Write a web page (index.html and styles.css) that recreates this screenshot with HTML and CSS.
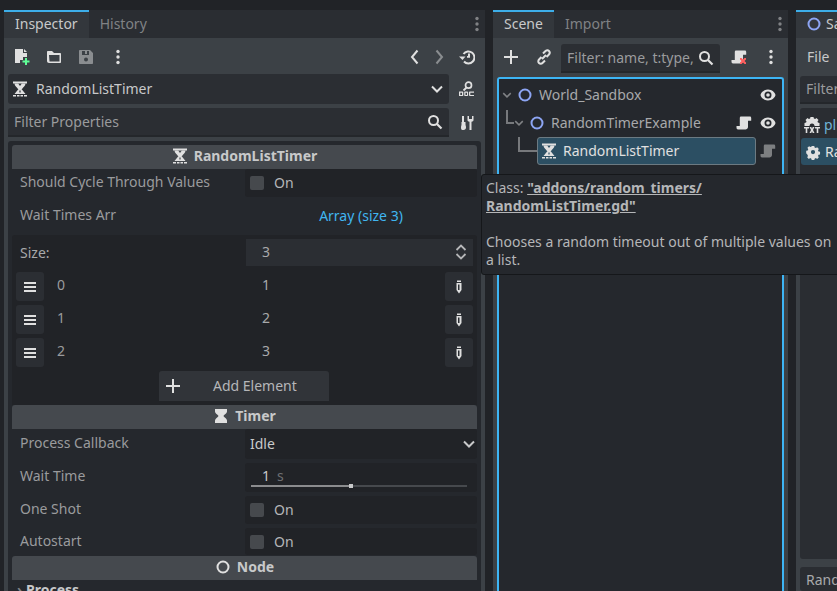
FILE: index.html
```html
<!DOCTYPE html>
<html lang="en">
<head>
    <meta charset="UTF-8">
    <title>Godot editor docks</title>
    <link rel="stylesheet" href="styles.css">
</head>
<body>
    <svg class="defs" width="0" height="0">
        <symbol id="i-timer" viewBox="0 0 16 16">
            <path fill="currentColor" d="M1 .5h14v2H1z"/>
            <path fill="currentColor" d="M2.500 2.500h3.700L8 5l1.800-2.500h3.700c0 2.500-2.500 3.800-3.500 5.500H6C5 6.300 2.500 5 2.500 2.500z"/>
            <path fill="currentColor" fill-rule="evenodd" d="M6.500 8h3l4 5h-11zM7.400 9.500v2h1.200v-2z"/>
            <path fill="currentColor" d="M1 14h3v1.500H1zM5 14h2.500v1.500H5zM8.500 14H11v1.500H8.500zM12 14h3v1.500h-3z"/>
        </symbol>
        <symbol id="i-hourglass" viewBox="0 0 16 16">
            <path fill="currentColor" d="M2 1h12v2.500c0 2-3 3-3.500 4.500.5 1.500 3.500 2.500 3.500 4.500V15H2v-2.500C2 10.500 5 9.500 5.500 8 5 6.500 2 5.500 2 3.500z"/>
        </symbol>
        <symbol id="i-node" viewBox="0 0 16 16">
            <circle cx="8" cy="8" r="5.500" fill="none" stroke="currentColor" stroke-width="2"/>
        </symbol>
        <symbol id="i-script" viewBox="0 0 16 16">
            <path fill="currentColor" d="M5 1.500c-.8 0-1.200.7-1.200 1.500v8H.5v1.500c0 1 .5 2 1.500 2h7.500c1.200 0 2.500-1 2.500-2.500V5.800h3.200V3c0-.8-.5-1.500-1.200-1.500z"/>
        </symbol>
        <symbol id="i-eye" viewBox="0 0 16 16">
            <path fill="currentColor" fill-rule="evenodd" d="M8 2.500c4 0 7 3 7.500 5.500-.5 2.500-3.500 5.500-7.500 5.500S1 10.500.5 8C1 5.500 4 2.500 8 2.500zm0 2a3.500 3.500 0 1 0 0 7 3.500 3.500 0 0 0 0-7zM8 6.200a1.800 1.800 0 1 1 0 3.600 1.800 1.800 0 0 1 0-3.600z"/>
        </symbol>
        <symbol id="i-search" viewBox="0 0 16 16">
            <circle cx="6.500" cy="6.500" r="4.500" fill="none" stroke="currentColor" stroke-width="2"/>
            <path d="M10 10l4.500 4.500" stroke="currentColor" stroke-width="2.200" fill="none"/>
        </symbol>
        <symbol id="i-dots" viewBox="0 0 16 16">
            <circle cx="8" cy="2.500" r="1.700" fill="currentColor"/>
            <circle cx="8" cy="8" r="1.700" fill="currentColor"/>
            <circle cx="8" cy="13.500" r="1.700" fill="currentColor"/>
        </symbol>
        <symbol id="i-down" viewBox="0 0 16 16">
            <path d="M3 5.500l5 5 5-5" fill="none" stroke="currentColor" stroke-width="2"/>
        </symbol>
        <symbol id="i-lines" viewBox="0 0 16 16">
            <path fill="currentColor" d="M2 3h12v2H2zM2 7h12v2H2zM2 11h12v2H2z"/>
        </symbol>
        <symbol id="i-edit" viewBox="0 0 16 16">
            <path fill="currentColor" fill-rule="evenodd" d="M6 1.500h4V3H6zM5.500 4h5v7L8 14.500 5.500 11zM7 5.500V11h1.500V5.500z"/>
        </symbol>
        <symbol id="i-plus" viewBox="0 0 16 16">
            <path fill="currentColor" d="M7 1h2v6h6v2H9v6H7V9H1V7h6z"/>
        </symbol>
    </svg>

    <main class="docks">
        <section class="dock dock-inspector">
            <div class="tabs">
                <div class="tab active">Inspector</div>
                <div class="tab">History</div>
                <svg class="ic tab-menu"><use href="#i-dots"/></svg>
            </div>
            <div class="toolbar">
                <span class="tool">
                    <svg class="ic" viewBox="0 0 16 16">
                        <path fill="#e0e0e0" d="M1 0h8v4h4v4H9v3H6v3H1z"/>
                        <path fill="#e0e0e0" d="M10 0l3 3h-3z"/>
                        <path fill="#5fff97" d="M11 9h2v2.500h2.500v2H13V16h-2v-2.500H8.500v-2H11z"/>
                    </svg>
                </span>
                <span class="tool">
                    <svg class="ic" viewBox="0 0 16 16">
                        <path fill="#e0e0e0" fill-rule="evenodd" d="M1 3c0-.6.4-1 1-1h4l2 2h6c.6 0 1 .4 1 1v8c0 .6-.4 1-1 1H3c-1.100 0-2-.9-2-2zm2 3l.5 6.500h10V6z"/>
                    </svg>
                </span>
                <span class="tool">
                    <svg class="ic dim" viewBox="0 0 16 16">
                        <path fill="currentColor" fill-rule="evenodd" d="M2 1h10l3 3v10c0 .6-.4 1-1 1H2c-.6 0-1-.4-1-1V2c0-.6.4-1 1-1zm2 1v4h7V2H9v3H7V2zM8 8.500a2 2 0 1 0 0 4 2 2 0 0 0 0-4z"/>
                    </svg>
                </span>
                <span class="tool"><svg class="ic"><use href="#i-dots"/></svg></span>
                <span class="spacer"></span>
                <span class="tool-nav">
                    <svg class="ic" viewBox="0 0 16 16"><path d="M10.500 1.500L5 8l5.500 6.500" fill="none" stroke="currentColor" stroke-width="2"/></svg>
                </span>
                <span class="tool-nav">
                    <svg class="ic dim" viewBox="0 0 16 16"><path d="M5.500 1.500L11 8l-5.500 6.500" fill="none" stroke="currentColor" stroke-width="2"/></svg>
                </span>
                <span class="tool-side">
                    <svg class="ic" viewBox="0 0 16 16">
                        <path d="M4.500 5a6 6 0 1 1 .5 7.500" fill="none" stroke="currentColor" stroke-width="2"/>
                        <path fill="currentColor" d="M0 7.500h6.500L3.500 11zM9 4.500h2v4.200H8V7h1z"/>
                    </svg>
                </span>
            </div>
            <div class="tool-row">
                <div class="picker">
                    <svg class="ic"><use href="#i-timer"/></svg>
                    <span class="picker-name">RandomListTimer</span>
                    <svg class="ic chev"><use href="#i-down"/></svg>
                </div>
                <span class="tool-side">
                    <svg class="ic" viewBox="0 0 16 16">
                        <circle cx="9.500" cy="4.200" r="3" fill="none" stroke="currentColor" stroke-width="1.700"/>
                        <path d="M7.500 6.500L4.500 9.500" stroke="currentColor" stroke-width="1.800" fill="none"/>
                        <path fill="currentColor" d="M0 10.500h3.500c.5 0 .8.400.8.800v2.900c0 .5-.3.800-.8.800H0zm1.300 1.200v2.300h1.700v-2.300zM5.200 11.300c0-.4.300-.8.800-.8h2.300c.5 0 .8.400.8.800v2.900c0 .5-.3.800-.8.800H6c-.5 0-.8-.3-.8-.8zm1.300.4v2.300h1.500v-2.300zM10 11.300c0-.4.300-.8.800-.8H15v1.200h-3.700v2.300H15V15h-4.200c-.5 0-.8-.3-.8-.8z"/>
                    </svg>
                </span>
            </div>
            <div class="tool-row filter-row">
                <div class="filter">
                    <span class="filter-text">Filter Properties</span>
                    <svg class="ic"><use href="#i-search"/></svg>
                </div>
                <span class="tool-side">
                    <svg class="ic" viewBox="0 0 16 16">
                        <path fill="currentColor" d="M3 1h2v6h1.500v2.500c0 1 .5 1.500.5 3 0 1.500-1 2.500-2.500 2.500S2 15 2 12.500c0-1.500.5-2 .5-3V7H3zM10 1v3h3V1h1.500v4c0 1-.8 1.500-2 1.800V15h-2V6.800c-1.200-.3-2-.8-2-1.800V1z"/>
                    </svg>
                </span>
            </div>
            <div class="props">
                <h3 class="section">
                    <svg class="ic"><use href="#i-timer"/></svg>RandomListTimer
                </h3>
                <div class="prop prop-check first">
                    <span class="prop-label">Should Cycle Through Values</span>
                    <span class="prop-value"><i class="box"></i>On</span>
                </div>
                <div class="prop prop-array">
                    <span class="prop-label">Wait Times Arr</span>
                    <span class="prop-link">Array (size 3)</span>
                </div>
                <div class="array">
                    <div class="size-row">
                        <span class="size-label">Size:</span>
                        <span class="size-value">3
                            <svg class="ic updown" viewBox="0 0 16 16"><path d="M3.500 6L8 1.500 12.500 6M3.500 10L8 14.500 12.500 10" fill="none" stroke="currentColor" stroke-width="1.800"/></svg>
                        </span>
                    </div>
                    <div class="item">
                        <span class="square"><svg class="ic"><use href="#i-lines"/></svg></span>
                        <span class="item-key">0</span>
                        <span class="item-value">1</span>
                        <span class="square"><svg class="ic"><use href="#i-edit"/></svg></span>
                    </div>
                    <div class="item">
                        <span class="square"><svg class="ic"><use href="#i-lines"/></svg></span>
                        <span class="item-key">1</span>
                        <span class="item-value">2</span>
                        <span class="square"><svg class="ic"><use href="#i-edit"/></svg></span>
                    </div>
                    <div class="item">
                        <span class="square"><svg class="ic"><use href="#i-lines"/></svg></span>
                        <span class="item-key">2</span>
                        <span class="item-value">3</span>
                        <span class="square"><svg class="ic"><use href="#i-edit"/></svg></span>
                    </div>
                    <div class="add-btn">
                        <svg class="ic"><use href="#i-plus"/></svg>
                        <span class="add-text">Add Element</span>
                    </div>
                </div>
                <h3 class="section">
                    <svg class="ic"><use href="#i-hourglass"/></svg>Timer
                </h3>
                <div class="prop prop-select">
                    <span class="prop-label">Process Callback</span>
                    <span class="prop-value">Idle<svg class="ic chev"><use href="#i-down"/></svg></span>
                </div>
                <div class="prop prop-slider">
                    <span class="prop-label">Wait Time</span>
                    <span class="prop-value slider-value">
                        <span class="num">1<em>s</em></span>
                        <span class="slider"><i class="slider-fill"></i><i class="slider-knob"></i></span>
                    </span>
                </div>
                <div class="prop prop-check">
                    <span class="prop-label">One Shot</span>
                    <span class="prop-value"><i class="box"></i>On</span>
                </div>
                <div class="prop prop-check last">
                    <span class="prop-label">Autostart</span>
                    <span class="prop-value"><i class="box"></i>On</span>
                </div>
                <h3 class="section">
                    <svg class="ic"><use href="#i-node"/></svg>Node
                </h3>
                <div class="group"><span class="group-arrow">›</span>Process</div>
            </div>
        </section>

        <section class="dock dock-scene">
            <div class="tabs">
                <div class="tab active">Scene</div>
                <div class="tab">Import</div>
                <svg class="ic tab-menu"><use href="#i-dots"/></svg>
            </div>
            <div class="toolbar scene-toolbar">
                <svg class="ic plus"><use href="#i-plus"/></svg>
                <svg class="ic link" viewBox="0 0 16 16">
                    <path d="M7 4.500l2-2c1.500-1.500 3-1.500 4-.5s1 2.500-.5 4l-2 2M9 11.500l-2 2c-1.500 1.500-3 1.500-4 .5s-1-2.500.5-4l2-2M6 10l4-4" fill="none" stroke="currentColor" stroke-width="2"/>
                </svg>
                <div class="filter scene-filter">
                    <span class="filter-text">Filter: name, t:type,</span>
                    <svg class="ic"><use href="#i-search"/></svg>
                </div>
                <svg class="ic script-x" viewBox="0 0 16 16">
                    <use href="#i-script"/>
                    <path fill="#ff5f5f" d="M9 9l1.500 0 1.500 1.500L13.500 9 15 9v1.500L13.500 12l1.500 1.500V15h-1.500L12 13.500 10.500 15H9v-1.500l1.500-1.500L9 10.500z"/>
                </svg>
                <svg class="ic scene-menu"><use href="#i-dots"/></svg>
            </div>
            <div class="tree">
                <div class="node">
                    <svg class="ic arrow"><use href="#i-down"/></svg>
                    <svg class="ic blue"><use href="#i-node"/></svg>
                    <span class="node-name">World_Sandbox</span>
                    <svg class="ic eye"><use href="#i-eye"/></svg>
                </div>
                <div class="node node-child">
                    <i class="elbow elbow-a"></i>
                    <svg class="ic arrow"><use href="#i-down"/></svg>
                    <svg class="ic blue"><use href="#i-node"/></svg>
                    <span class="node-name">RandomTimerExample</span>
                    <svg class="ic script"><use href="#i-script"/></svg>
                    <svg class="ic eye"><use href="#i-eye"/></svg>
                </div>
                <div class="node node-leaf">
                    <i class="elbow elbow-b"></i>
                    <div class="node-selected">
                        <svg class="ic"><use href="#i-timer"/></svg>
                        <span>RandomListTimer</span>
                    </div>
                    <svg class="ic script grey"><use href="#i-script"/></svg>
                </div>
            </div>
        </section>

        <section class="dock dock-script">
            <div class="tabs">
                <div class="tab active"><svg class="ic blue"><use href="#i-node"/></svg>Sandbox</div>
            </div>
            <div class="file-menu">File</div>
            <div class="filter script-filter"><span class="filter-text">Filter Scripts</span></div>
            <div class="script-list">
                <div class="script-item">
                    <svg class="ic" viewBox="0 0 16 16">
                        <path fill="currentColor" d="M6.500 0h3l.4 1.500 1.300.5L12.500 1l2 2-1 1.500.4 1L15.500 6v3H.500V6l1.600-.5.400-1L1.500 3l2-2 1.300 1 1.300-.5z"/>
                        <path fill="#2a2d32" d="M5.500 9a2.500 2.500 0 0 1 5 0z"/>
                        <path fill="currentColor" d="M0 10h5v1.500H3.300V16H1.700v-4.500H0zM5.500 10h1.800L8 11.800 8.700 10h1.800L9 13l1.500 3H8.700L8 14.200 7.300 16H5.500L7 13zM11 10h5v1.500h-1.700V16h-1.600v-4.500H11z"/>
                    </svg>
                    <span class="script-link">plugin.gd</span>
                </div>
                <div class="script-item selected">
                    <svg class="ic" viewBox="0 0 16 16">
                        <path fill="currentColor" fill-rule="evenodd" d="M6.500 1h3l.4 1.800 1.400.6 1.600-1 2 2-1 1.600.6 1.400 1.800.4v3l-1.800.4-.6 1.400 1 1.600-2 2-1.600-1-1.400.6-.4 1.800h-3l-.4-1.800-1.400-.6-1.600 1-2-2 1-1.600-.6-1.400L0 9.500v-3l1.800-.4.600-1.400-1-1.600 2-2 1.600 1 1.400-.6zM8 5.500a2.500 2.500 0 1 0 0 5 2.500 2.500 0 0 0 0-5z" transform="translate(1.200 1.200) scale(.85)"/>
                    </svg>
                    <span>RandomListTimer.gd</span>
                </div>
            </div>
            <div class="script-footer">RandomListTimer</div>
        </section>
    </main>

    <div class="tooltip">
        <p>Class: <b>"addons/random_timers/<br>RandomListTimer.gd"</b></p>
        <p class="tooltip-desc">Chooses a random timeout out of multiple values on a list.</p>
    </div>
</body>
</html>
```

FILE: styles.css
```css
* {
    box-sizing: border-box;
}
html, body {
    height: 100%;
    margin: 0;
    overflow: hidden;
}
body {
    background: #212327;
    color: #e0e0e0;
    font-family: "Noto Sans", sans-serif;
    font-size: 14px;
    line-height: 20px;
}
.defs {
    position: absolute;
}
.ic {
    display: block;
    flex: none;
    width: 16px;
    height: 16px;
    color: #e0e0e0;
}
.ic.dim {
    color: #8a8d90;
}
.ic.blue {
    color: #8da5f3;
}
.spacer {
    flex: 1;
}
.docks {
    display: flex;
    gap: 8px;
    width: 900px;
    height: 581px;
    margin: 10px 0 0 4px;
}
.dock {
    flex: none;
    display: flex;
    flex-direction: column;
    background: #3c4146;
    overflow: hidden;
}
.dock-inspector {
    width: 481px;
}
.dock-scene {
    width: 295px;
}
.dock-script {
    width: 100px;
}

/* tabs */
.tabs {
    display: flex;
    position: relative;
    height: 28px;
    flex: none;
    background: #2a2d32;
}
.tab {
    display: flex;
    align-items: center;
    padding: 0 11px 2px;
    color: #808285;
    border-top: 2px solid transparent;
}
.tab.active {
    background: #33373c;
    border-top-color: #3daee9;
    color: #c8c9ca;
}
.dock-scene .tab.active {
    min-width: 61px;
}
.dock-script .tab.active {
    gap: 4px;
    width: 100%;
    padding-left: 10px;
}
.tab-menu {
    position: absolute;
    right: 0;
    top: 6px;
    color: #808285;
}

/* toolbars */
.toolbar {
    display: flex;
    align-items: center;
    flex: none;
    height: 36px;
    padding: 2px 10px 0;
}
.tool {
    width: 32px;
    display: flex;
    justify-content: flex-start;
}
.tool-nav {
    width: 24px;
}
.tool-side {
    width: 32px;
    display: flex;
    justify-content: center;
    flex: none;
}
.toolbar .tool-side {
    margin: 0 -8px 0 -4px;
}
.tool-row {
    display: flex;
    align-items: center;
    flex: none;
    height: 30px;
    padding-left: 4px;
}
.tool-row .tool-side {
    margin-left: 2px;
}
.filter-row {
    margin-top: 4px;
    height: 29px;
}
.picker {
    display: flex;
    align-items: center;
    width: 441px;
    height: 30px;
    padding: 0 4px;
    background: #2b2e33;
    border-radius: 3px;
    color: #c8c9ca;
}
.picker-name {
    flex: 1;
    margin-left: 8px;
}
.filter {
    display: flex;
    align-items: center;
    width: 441px;
    height: 29px;
    padding: 0 6px;
    background: #2b2e33;
    border-bottom: 2px solid #24272b;
    border-radius: 3px 3px 0 0;
}
.filter-text {
    flex: 1;
    color: #9a9b9d;
    white-space: nowrap;
    overflow: hidden;
}

/* inspector */
.props {
    flex: 1;
    margin: 4px 4px 0;
    padding: 4px;
    background: #25282d;
    border-radius: 3px 3px 0 0;
    overflow: hidden;
}
.section {
    display: flex;
    align-items: center;
    justify-content: center;
    gap: 6px;
    height: 24px;
    margin: 0;
    padding-bottom: 2px;
    background: #45494e;
    border-radius: 3px 3px 0 0;
    color: #c8c9ca;
    font-size: 14px;
    font-weight: 700;
}
.prop {
    display: grid;
    grid-template-columns: 233px 232px;
    height: 28px;
    margin-top: 4px;
}
.prop.first {
    margin-top: 0;
}
.prop.last {
    height: 27px;
    margin-bottom: 1px;
}
.prop-array {
    height: 35px;
    margin-top: 3px;
}
.prop-array .prop-label {
    padding-top: 5px;
}
.prop-select {
    height: 30px;
    margin-top: 0;
}
.prop-select .prop-label {
    padding-top: 4px;
}
.prop-slider {
    height: 29px;
}
.prop-label {
    padding: 3px 0 0 8px;
    color: #9a9b9d;
}
.prop-value {
    display: flex;
    align-items: center;
    padding-left: 5px;
    background: #212327;
    border-radius: 3px;
    color: #c8c9ca;
}
.prop-check .prop-value {
    color: #b5b6b8;
}
.box {
    flex: none;
    width: 14px;
    height: 14px;
    margin-right: 10px;
    background: #46494d;
    border-radius: 2px;
}
.prop-link {
    padding-top: 6px;
    text-align: center;
    color: #40b5f0;
}
.prop-select .chev {
    margin-left: auto;
    color: #c8c9ca;
}
.slider-value {
    display: block;
    position: relative;
    padding: 3px 0 0 17px;
}
.num em {
    margin-left: 7px;
    color: #6e7073;
    font-style: normal;
}
.slider {
    position: absolute;
    left: 6px;
    right: 10px;
    bottom: 5px;
    height: 2px;
    background: #46494d;
}
.slider-fill {
    position: absolute;
    left: 0;
    top: 0;
    bottom: 0;
    width: 46%;
    background: #8b8c8e;
}
.slider-knob {
    position: absolute;
    left: 45.500%;
    top: -1px;
    width: 4px;
    height: 4px;
    background: #c8c9ca;
}

/* array editor */
.array {
    display: flex;
    flex-direction: column;
    gap: 4px;
    padding: 4px;
    background: #212327;
    border-radius: 3px 3px 0 0;
}
.size-row {
    display: grid;
    grid-template-columns: 230px 227px;
    height: 27px;
    margin-bottom: 2px;
}
.size-label {
    padding: 4px 0 0 4px;
    color: #a8a9ab;
}
.size-value {
    display: flex;
    align-items: center;
    justify-content: space-between;
    padding: 0 4px 2px 16px;
    background: #2b2e33;
    color: #a8a9ab;
}
.updown {
    color: #b5b6b8;
}
.item {
    display: flex;
    align-items: center;
    height: 29px;
}
.square {
    display: flex;
    align-items: center;
    justify-content: center;
    flex: none;
    width: 28px;
    height: 29px;
    background: #2b2e33;
    border-radius: 3px;
}
.item-key {
    width: 202px;
    padding: 0 0 3px 13px;
    color: #9a9b9d;
}
.item-value {
    width: 199px;
    padding: 0 0 3px 16px;
    color: #a8a9ab;
}
.add-btn {
    display: flex;
    align-items: center;
    align-self: center;
    width: 170px;
    height: 30px;
    margin-left: -1px;
    padding-left: 6px;
    background: #313439;
    border-radius: 3px 3px 0 0;
    color: #b5b6b8;
}
.add-text {
    margin-left: 32px;
}
.group {
    padding-left: 5px;
    font-weight: 700;
    color: #c8c9ca;
}
.group-arrow {
    display: inline-block;
    width: 9px;
    color: #808285;
}

/* scene tree */
.scene-toolbar {
    padding: 2px 0 0 10px;
}
.link {
    margin-left: 17px;
}
.scene-filter {
    flex: none;
    width: 159px;
    margin: 3px 0 0 9px;
}
.script-x {
    margin-left: 11px;
}
.scene-menu {
    margin-left: 16px;
}
.tree {
    flex: 1;
    margin: 3px 4px 0;
    padding: 2px 0;
    background: #25282d;
    border: 2px solid #3db5f5;
    border-bottom: 0;
    border-radius: 3px 3px 0 0;
    color: #a8a9ab;
}
.node {
    display: flex;
    align-items: center;
    position: relative;
    height: 28px;
    padding-left: 2px;
}
.node .arrow {
    width: 12px;
    height: 12px;
    margin-right: 4px;
    color: #808285;
}
.node .blue {
    margin-right: 6px;
}
.node-name {
    flex: 1;
}
.node-child {
    padding-left: 14px;
}
.node-leaf {
    padding-left: 38px;
}
.elbow {
    position: absolute;
    border-left: 2px solid #77797c;
    border-bottom: 2px solid #77797c;
}
.elbow-a {
    left: 7px;
    top: 1px;
    width: 8px;
    height: 14px;
}
.elbow-b {
    left: 19px;
    top: 0;
    width: 19px;
    height: 15px;
}
.node-selected {
    display: flex;
    align-items: center;
    gap: 6px;
    width: 219px;
    height: 28px;
    padding-left: 3px;
    background: #2c4f63;
    border: 1px solid #6c7a82;
    border-radius: 3px;
    color: #e0e0e0;
}
.eye {
    margin: 0 6px 0 8px;
}
.script {
    margin-left: 8px;
}
.script.grey {
    margin-left: 4px;
    color: #7d7f81;
}

/* script dock */
.file-menu {
    flex: none;
    height: 36px;
    padding: 9px 0 0 11px;
    color: #c8c9ca;
}
.script-filter {
    flex: none;
    width: 100px;
    height: 28px;
    margin: 2px 0 0 4px;
}
.script-list {
    height: 451px;
    flex: none;
    margin: 4px 0 0 4px;
    padding-top: 3px;
    background: #2a2d32;
    border-radius: 3px;
}
.script-item {
    display: flex;
    align-items: center;
    gap: 4px;
    height: 27px;
    padding-left: 4px;
    white-space: nowrap;
    overflow: hidden;
}
.script-link {
    color: #6fb3d6;
}
.script-item.selected {
    margin-left: 1px;
    background: #2c4f63;
    border-radius: 3px;
    color: #e0e0e0;
}
.script-footer {
    height: 40px;
    margin: 8px 0 0 4px;
    padding: 3px 0 0 6px;
    background: #2a2d32;
    border-radius: 3px;
    color: #a8a9ab;
    white-space: nowrap;
}

/* tooltip over the docks */
.tooltip {
    position: absolute;
    left: 481px;
    top: 174px;
    width: 370px;
    height: 101px;
    padding: 4px 20px 0 4px;
    background: #25282d;
    border: 1px solid #15171a;
    border-radius: 3px;
    color: #b5b6b8;
    line-height: 18px;
}
.tooltip p {
    margin: 0;
}
.tooltip b {
    text-decoration: underline;
}
.tooltip .tooltip-desc {
    margin-top: 18px;
    width: 350px;
}
```
